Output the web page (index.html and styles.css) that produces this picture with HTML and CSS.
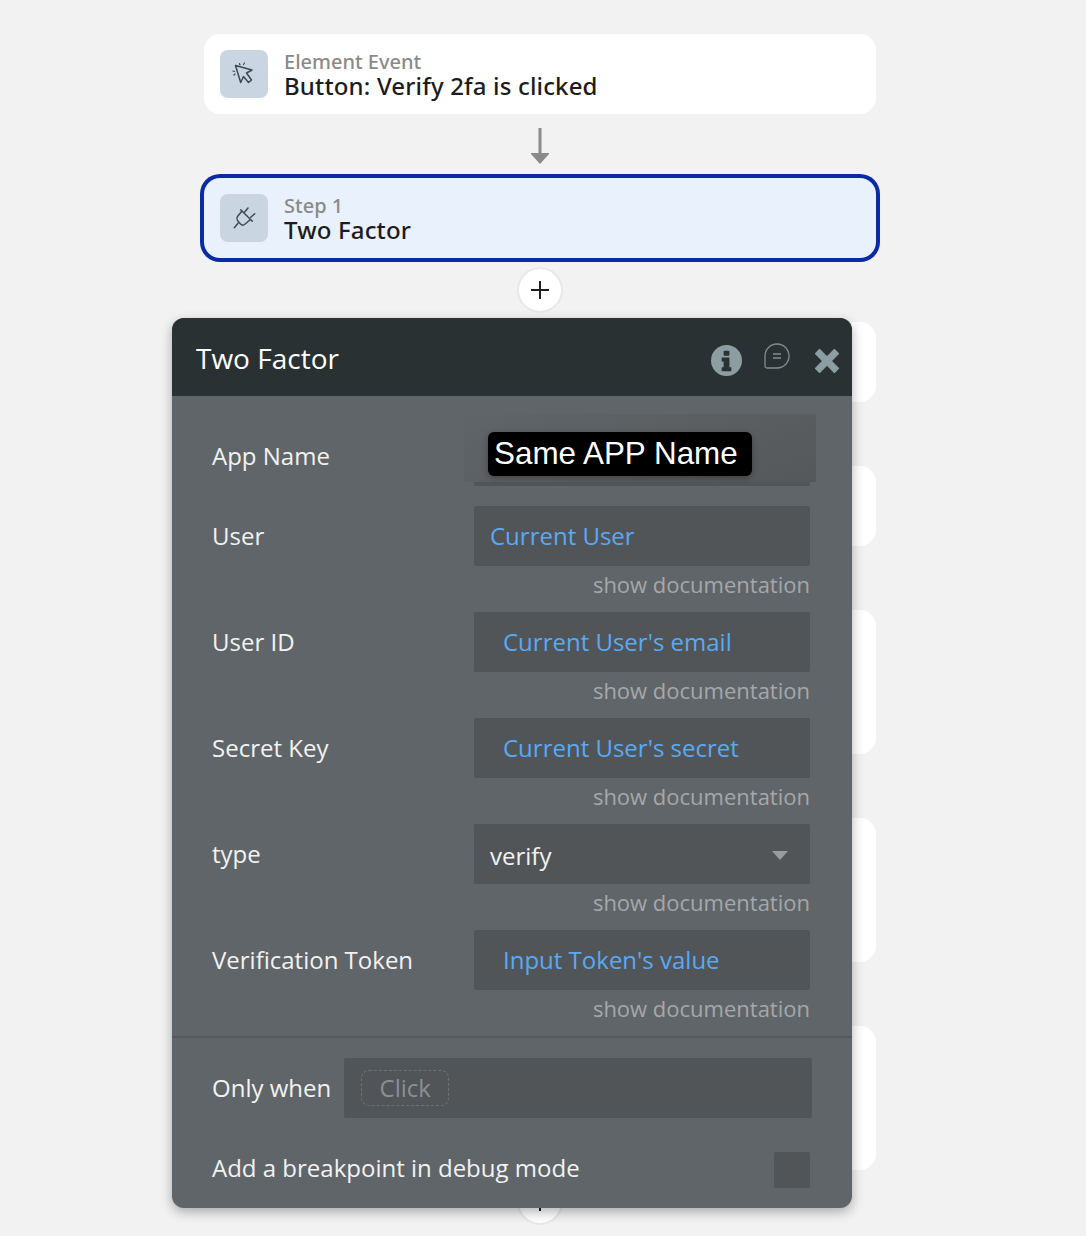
FILE: index.html
```html
<!DOCTYPE html>
<html lang="en">
<head>
<meta charset="utf-8">
<title>Two Factor</title>
<link rel="stylesheet" href="styles.css">
</head>
<body>
<main class="canvas">
  <section class="flow">
    <article class="card">
      <div class="card-icon">
        <svg width="24" height="24" viewBox="0 0 24 24" fill="none" stroke="#3f4a52" stroke-width="1.5" stroke-linejoin="round" stroke-linecap="round">
          <path d="M3.500 3.500 20 8l-5.500 3 5 7-3 2.500-5-6-2.800 6z"/>
          <path d="M1 9l1.500.5M2 13l1-1M7.500 1.500 8 3M12.500 1l-1 1.500" stroke-width="1.200"/>
        </svg>
      </div>
      <div class="card-text">
        <div class="card-kicker">Element Event</div>
        <div class="card-title">Button: Verify 2fa is clicked</div>
      </div>
    </article>
    <div class="connector">
      <svg width="20" height="36" viewBox="0 0 20 36" fill="#8a8a8a"><rect x="8.500" y="0" width="3" height="27"/><path d="M1 25h18v1l-9 10-9-10z"/></svg>
    </div>
    <article class="card card-selected">
      <div class="card-icon">
        <svg width="24" height="24" viewBox="0 0 24 24" fill="none" stroke="#3f4a52" stroke-width="1.500" stroke-linecap="round" stroke-linejoin="round">
          <path d="M10 5 5.500 10.500Q4 12.500 5.500 14.500L8.500 18Q10.500 20 12.500 18.500L18.500 13.500"/>
          <path d="M8.700 3.700 20.300 15.300M12.700 6 16 2M18.700 11.300 22.700 7.700M6 17.300 2.300 21.700"/>
        </svg>
      </div>
      <div class="card-text">
        <div class="card-kicker">Step 1</div>
        <div class="card-title">Two Factor</div>
      </div>
    </article>
    <div class="connector"><div class="plus"><svg width="20" height="20" viewBox="0 0 20 20" stroke="#1f1f1f" stroke-width="2"><path d="M10 1v18M1 10h18"/></svg></div></div>
    <div class="card card-back"></div>
    <div class="connector"></div>
    <div class="card card-back"></div>
    <div class="connector"></div>
    <div class="card card-back card-tall"></div>
    <div class="connector"></div>
    <div class="card card-back card-tall"></div>
    <div class="connector"></div>
    <div class="card card-back card-tall"></div>
    <div class="connector"><div class="plus"><svg width="20" height="20" viewBox="0 0 20 20" stroke="#1f1f1f" stroke-width="2"><path d="M10 1v18M1 10h18"/></svg></div></div>
  </section>

  <section class="panel">
    <header class="panel-head">
      <h1 class="panel-title">Two Factor</h1>
      <div class="panel-tools">
        <svg class="tool-info" width="31" height="31" viewBox="0 0 32 32"><circle cx="16" cy="16" r="16" fill="#8d9ea3"/><rect x="13" y="6" width="6" height="5" rx="1" fill="#2a3133"/><path d="M11 13h8v10h2v4H11v-4h2v-6h-2z" fill="#2a3133"/></svg>
        <svg class="tool-chat" width="26" height="26" viewBox="0 0 26 26" fill="none" stroke="#7f8e93" stroke-width="1.300"><path d="M13 1a12 12 0 0 1 0 24H3a2 2 0 0 1-2-2V13A12 12 0 0 1 13 1z"/><path d="M9 11h8M9 15h8"/></svg>
        <svg class="tool-close" width="24" height="24" viewBox="0 0 26 26" fill="#8d9ea3" stroke="#8d9ea3" stroke-width="2" stroke-linejoin="round"><path d="M1 5 5 1l8 8 8-8 4 4-8 8 8 8-4 4-8-8-8 8-4-4 8-8z"/></svg>
      </div>
    </header>
    <div class="panel-body">
      <div class="field">
        <label class="field-label">App Name</label>
        <div class="control"></div>
        <div class="redact"><span class="redact-tag">Same APP Name</span></div>
      </div>
      <div class="field">
        <label class="field-label">User</label>
        <div class="control control-link"><span>Current User</span></div>
        <div class="doc">show documentation</div>
      </div>
      <div class="field">
        <label class="field-label">User ID</label>
        <div class="control control-link control-inset"><span>Current User's email</span></div>
        <div class="doc">show documentation</div>
      </div>
      <div class="field">
        <label class="field-label">Secret Key</label>
        <div class="control control-link control-inset"><span>Current User's secret</span></div>
        <div class="doc">show documentation</div>
      </div>
      <div class="field">
        <label class="field-label">type</label>
        <div class="control control-select"><span>verify</span><i class="caret"></i></div>
        <div class="doc">show documentation</div>
      </div>
      <div class="field">
        <label class="field-label">Verification Token</label>
        <div class="control control-link control-inset"><span>Input Token's value</span></div>
        <div class="doc">show documentation</div>
      </div>
    </div>
    <div class="panel-foot">
      <div class="when">
        <span class="foot-label foot-label-when">Only when</span>
        <div class="when-box"><span class="click-chip">Click</span></div>
      </div>
      <div class="breakpoint">
        <span class="foot-label foot-label-break">Add a breakpoint in debug mode</span>
        <span class="checkbox"></span>
      </div>
    </div>
  </section>
</main>
</body>
</html>
```
FILE: styles.css
```css
* { box-sizing: border-box; }
html, body { margin: 0; height: 100%; }
body {
  background: #f2f2f2;
  font-family: "Open Sans", "Noto Sans", sans-serif;
  overflow: hidden;
}
.canvas { position: relative; width: 1086px; height: 1236px; overflow: hidden; }
.flow { width: 1080px; display: flex; flex-direction: column; align-items: center; padding-top: 34px; }

.card {
  width: 672px;
  height: 80px;
  flex: none;
  display: flex;
  align-items: center;
  gap: 16px;
  padding: 0 16px;
  background: #fff;
  border-radius: 16px;
}
.card-tall { height: 144px; }
.card-selected { background: #e9f1fc; box-shadow: 0 0 0 4px #0b2aa5; }
.card-icon {
  width: 48px; height: 48px; flex: none;
  display: flex; align-items: center; justify-content: center;
  background: #c9d5e0; border-radius: 8px;
}
.card-text { display: flex; flex-direction: column; padding-top: 2px; }
.card-kicker { font-family: "Noto Sans", "Open Sans", sans-serif; font-size: 20px; line-height: 22px; color: #8a8a8a; font-weight: 500; }
.card-title { font-family: "Noto Sans", "Open Sans", sans-serif; font-size: 24px; line-height: 26px; letter-spacing: .16px; color: #1c1c1c; font-weight: 500; }

.connector { height: 64px; flex: none; display: flex; align-items: center; justify-content: center; }
.plus {
  width: 46px; height: 46px; flex: none;
  display: flex; align-items: center; justify-content: center;
  background: #fff; border: 2px solid #e8e8e8; border-radius: 50%;
}

.panel {
  position: absolute; left: 172px; top: 318px;
  width: 680px; height: 890px;
  display: flex; flex-direction: column;
  background: #606569;
  border-radius: 12px;
  overflow: hidden;
  box-shadow: 0 4px 12px rgba(0, 0, 0, .3);
}
.panel-head {
  height: 78px; flex: none;
  display: flex; align-items: center; justify-content: space-between;
  padding: 0 13px 0 24px;
  background: #2a3133;
}
.panel-title { margin: 0; padding-top: 2px; font-size: 28px; line-height: 36px; font-weight: 400; color: #fff; }
.panel-tools { display: flex; align-items: center; }
.tool-info { margin: 6px 22px 0 0; }
.tool-chat { margin: 0 25px 2px 0; }
.tool-close { margin-top: 7px; }

.panel-body { padding: 30px 42px 0 40px; flex: none; height: 640px; }
.field {
  position: relative;
  display: grid;
  grid-template-columns: 262px 336px;
  margin-bottom: 20px;
}
.field:has(.doc) { margin-bottom: 0; }
.field-label { font-size: 24px; line-height: 60px; color: #f2f2f2; }
.control {
  height: 60px;
  display: flex; align-items: center;
  padding: 0 16px;
  background: #515558;
  border-radius: 2px;
  font-size: 24px;
  color: #f2f2f2;
}
.control-link { color: #5aa9f5; padding-bottom: 2px; }
.control-inset { padding-left: 29px; }
.control-select { justify-content: space-between; padding-top: 2px; padding-right: 22px; }
.caret { width: 0; height: 0; margin-top: 1px; border: 8px solid transparent; border-top: 9px solid #999c9f; border-bottom: 0; }
.doc {
  grid-column: 2;
  height: 46px;
  text-align: right;
  font-size: 22px;
  line-height: 36px;
  color: #a5a8aa;
}
.redact {
  position: absolute; left: 252px; top: -12px;
  width: 352px; height: 68px;
  padding: 18px 0 0 24px;
  background: linear-gradient(160deg, #606569 0%, #5c6063 40%, #54585b 100%);
}
.redact-tag {
  display: inline-block;
  width: 264px; height: 44px;
  padding-left: 6px;
  background: #000; color: #fff;
  border-radius: 6px;
  box-shadow: 0 2px 6px rgba(0, 0, 0, .3);
  font-family: "Liberation Sans", Arial, sans-serif;
  font-size: 31.400px; line-height: 43px;
}
.panel-foot {
  flex: 1;
  border-top: 2px solid #56595d;
  padding: 20px 40px 0;
}
.foot-label { font-size: 24px; color: #f2f2f2; white-space: nowrap; }
.foot-label-when { padding-bottom: 2px; }
.foot-label-break { padding-bottom: 4px; }
.when { display: flex; align-items: center; gap: 13px; }
.when-box {
  flex: 1; height: 60px;
  display: flex; align-items: center;
  padding-left: 17px;
  background: #515558;
  border-radius: 2px;
}
.click-chip {
  width: 88px; height: 36px;
  display: flex; align-items: center; justify-content: center;
  padding-bottom: 2px;
  border: 1px dashed #6d7174;
  border-radius: 8px;
  font-size: 24px; color: #8c9090;
}
.breakpoint { display: flex; align-items: center; justify-content: space-between; margin-top: 33px; padding-right: 2px; }
.checkbox { width: 36px; height: 36px; background: #515558; border-radius: 2px; }
```
